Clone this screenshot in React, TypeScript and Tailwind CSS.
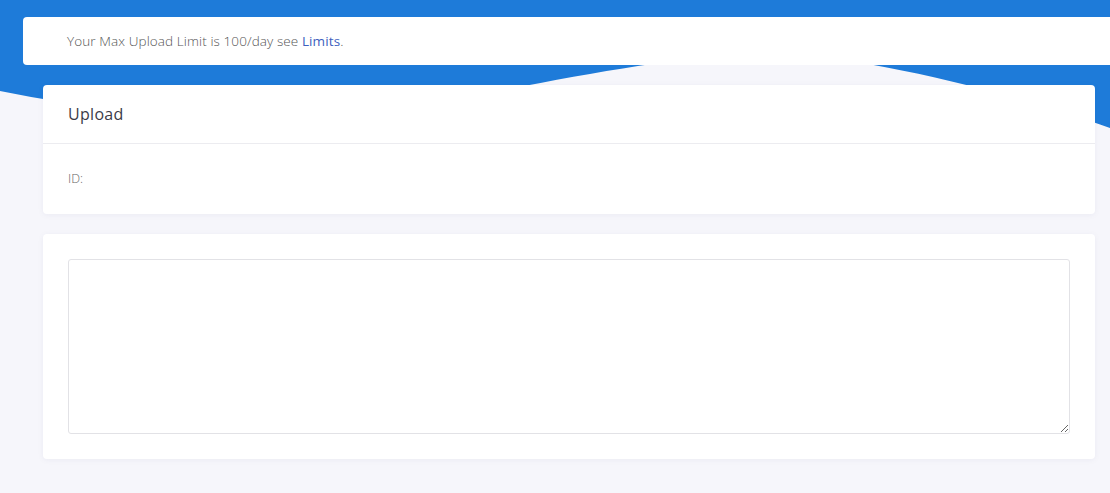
import React from 'react';

const font = { fontFamily: '"Open Sans", "Noto Sans", sans-serif' };

const Wave: React.FC = () => (
  <svg
    className="absolute left-0 top-0 w-full h-[130px]"
    viewBox="0 0 1110 130"
    preserveAspectRatio="none"
  >
    <path
      d="M0,0 H1110 V128 C1010,92 850,52 765,54 C620,56 420,116 310,118 C210,120 100,112 0,91 Z"
      fill="#1e7bd9"
    />
  </svg>
);

const App: React.FC = () => {
  return (
    <div className="relative min-h-[493px] w-[1110px] overflow-hidden bg-[#f6f6fb]" style={font}>
      <Wave />
      <div className="relative pt-[17px]">
        {/* Notice */}
        <div className="ml-[23px] w-[1110px] h-[48px] bg-white rounded-[4px] flex items-center pl-[44px]">
          <p className="text-[13.5px] tracking-[0.1px] text-[#555] font-light">
            Your Max Upload Limit is 100/day see <a className="text-[#3e5fbe] font-normal">Limits</a>.
          </p>
        </div>

        <div className="mt-[20px] ml-[43px] w-[1052px] space-y-[20px]">
          {/* Upload card */}
          <div className="bg-white rounded-[4px] shadow-[0_1px_6px_rgba(30,40,90,0.05)]">
            <div className="h-[59px] flex items-center px-[25px] border-b border-[#ececf0]">
              <h2 className="text-[16px] font-medium tracking-[0.3px] text-[#3b3b48]">Upload</h2>
            </div>
            <div className="h-[70px] flex items-center px-[25px]">
              <span className="text-[12.5px] font-light text-[#666]">ID:</span>
            </div>
          </div>

          {/* Textarea card */}
          <div className="bg-white rounded-[4px] shadow-[0_1px_6px_rgba(30,40,90,0.05)] p-[25px]">
            <textarea className="block w-full h-[175px] border border-[#e2e2e6] rounded-[3px] outline-none" />
          </div>
        </div>
      </div>
    </div>
  );
};

export default App;
